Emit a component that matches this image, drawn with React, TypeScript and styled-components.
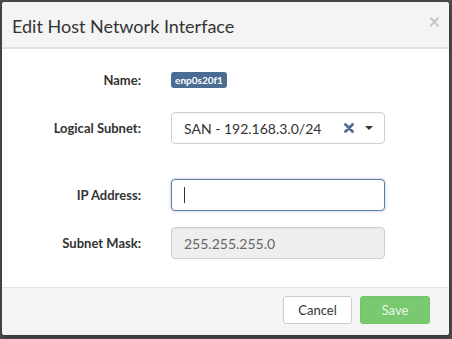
import React from "react";
import styled, { createGlobalStyle } from "styled-components";

const GlobalStyle = createGlobalStyle`
  html, body {
    margin: 0;
    padding: 0;
    background: #4e4e4e;
    font-family: Lato, "Open Sans", sans-serif;
  }
`;

const Backdrop = styled.div`
  width: 452px;
  height: 339px;
  padding: 2px 0 0 2px;
  box-sizing: border-box;
`;

const Dialog = styled.div`
  width: 447px;
  height: 333px;
  background: #fff;
  border-radius: 3px;
  overflow: hidden;
  display: flex;
  flex-direction: column;
  box-shadow: 0 2px 6px rgba(0, 0, 0, 0.4);
`;

const Header = styled.div`
  height: 45px;
  background: #f4f4f4;
  border-bottom: 2px solid #e1e1e1;
  display: flex;
  align-items: center;
  justify-content: space-between;
  padding: 0 9px 0 10px;
  flex-shrink: 0;
`;

const Title = styled.h4`
  margin: 0;
  font-size: 18px;
  font-weight: 400;
  color: #333;
  margin-top: 2px;
`;

const Close = styled.span`
  font-size: 20px;
  font-weight: 700;
  color: #c6c6c6;
  line-height: 1;
  margin-top: -8px;
`;

const Body = styled.div`
  flex: 1;
  padding-top: 15px;
`;

const Row = styled.div<{ $gapAfter?: number }>`
  display: grid;
  grid-template-columns: 139px 214px;
  column-gap: 30px;
  align-items: center;
  height: 32px;
  margin-bottom: ${(p) => p.$gapAfter ?? 16}px;
`;

const Label = styled.label`
  text-align: right;
  font-size: 13px;
  font-weight: 700;
  color: #333;
`;

const Badge = styled.span`
  justify-self: start;
  box-sizing: border-box;
  width: 56px;
  height: 16px;
  background: #4b6d93;
  color: #fff;
  font-size: 10px;
  font-weight: 700;
  text-align: center;
  border-radius: 3px;
  line-height: 16px;
`;

const Field = styled.div<{ $focus?: boolean; $disabled?: boolean }>`
  height: 32px;
  box-sizing: border-box;
  border: 1px solid ${(p) => (p.$focus ? "#5d7ea6" : "#cfcfcf")};
  border-radius: 4px;
  background: ${(p) => (p.$disabled ? "#eeeeee" : "#fff")};
  box-shadow: ${(p) =>
    p.$focus ? "0 0 3px rgba(75, 109, 147, 0.45)" : "inset 0 1px 1px rgba(0,0,0,0.04)"};
  display: flex;
  align-items: center;
  padding: 0 12px;
  font-size: 14px;
  color: ${(p) => (p.$disabled ? "#666" : "#333")};
`;

const SelectText = styled.span`
  flex: 1;
`;

const Caret = styled.span`
  width: 0;
  height: 0;
  border-left: 4px solid transparent;
  border-right: 4px solid transparent;
  border-top: 4px solid #333;
  margin-left: 11px;
  margin-right: -1px;
`;

const Cursor = styled.span`
  width: 1px;
  height: 16px;
  background: #333;
`;

const Footer = styled.div`
  height: 44px;
  flex-shrink: 0;
  background: #f4f4f4;
  border-top: 1px solid #e4e4e4;
  display: flex;
  align-items: center;
  justify-content: flex-end;
  gap: 8px;
  padding: 0 19px 3px 0;
`;

const Button = styled.button<{ $primary?: boolean }>`
  height: 28px;
  width: ${(p) => (p.$primary ? 70 : 69)}px;
  border-radius: 3px;
  font-family: Lato, sans-serif;
  font-size: 13px;
  border: 1px solid ${(p) => (p.$primary ? "#72c36a" : "#cccccc")};
  background: ${(p) => (p.$primary ? "#79c971" : "#fff")};
  color: ${(p) => (p.$primary ? "#eaf7e8" : "#333")};
  padding: 0;
`;

const ClearIcon = () => (
  <svg width="10" height="10" viewBox="0 0 10 10">
    <path d="M1.5 1.5 L8.5 8.5 M8.5 1.5 L1.5 8.5" stroke="#4b6d93" strokeWidth="2.8" strokeLinecap="round" />
  </svg>
);

export default function App() {
  return (
    <>
      <GlobalStyle />
      <Backdrop>
        <Dialog>
          <Header>
            <Title>Edit Host Network Interface</Title>
            <Close>×</Close>
          </Header>
          <Body>
            <Row>
              <Label>Name:</Label>
              <Badge>enp0s20f1</Badge>
            </Row>
            <Row $gapAfter={35}>
              <Label>Logical Subnet:</Label>
              <Field>
                <SelectText>SAN - 192.168.3.0/24</SelectText>
                <ClearIcon />
                <Caret />
              </Field>
            </Row>
            <Row>
              <Label>IP Address:</Label>
              <Field $focus>
                <Cursor />
              </Field>
            </Row>
            <Row>
              <Label>Subnet Mask:</Label>
              <Field $disabled>255.255.255.0</Field>
            </Row>
          </Body>
          <Footer>
            <Button>Cancel</Button>
            <Button $primary>Save</Button>
          </Footer>
        </Dialog>
      </Backdrop>
    </>
  );
}
